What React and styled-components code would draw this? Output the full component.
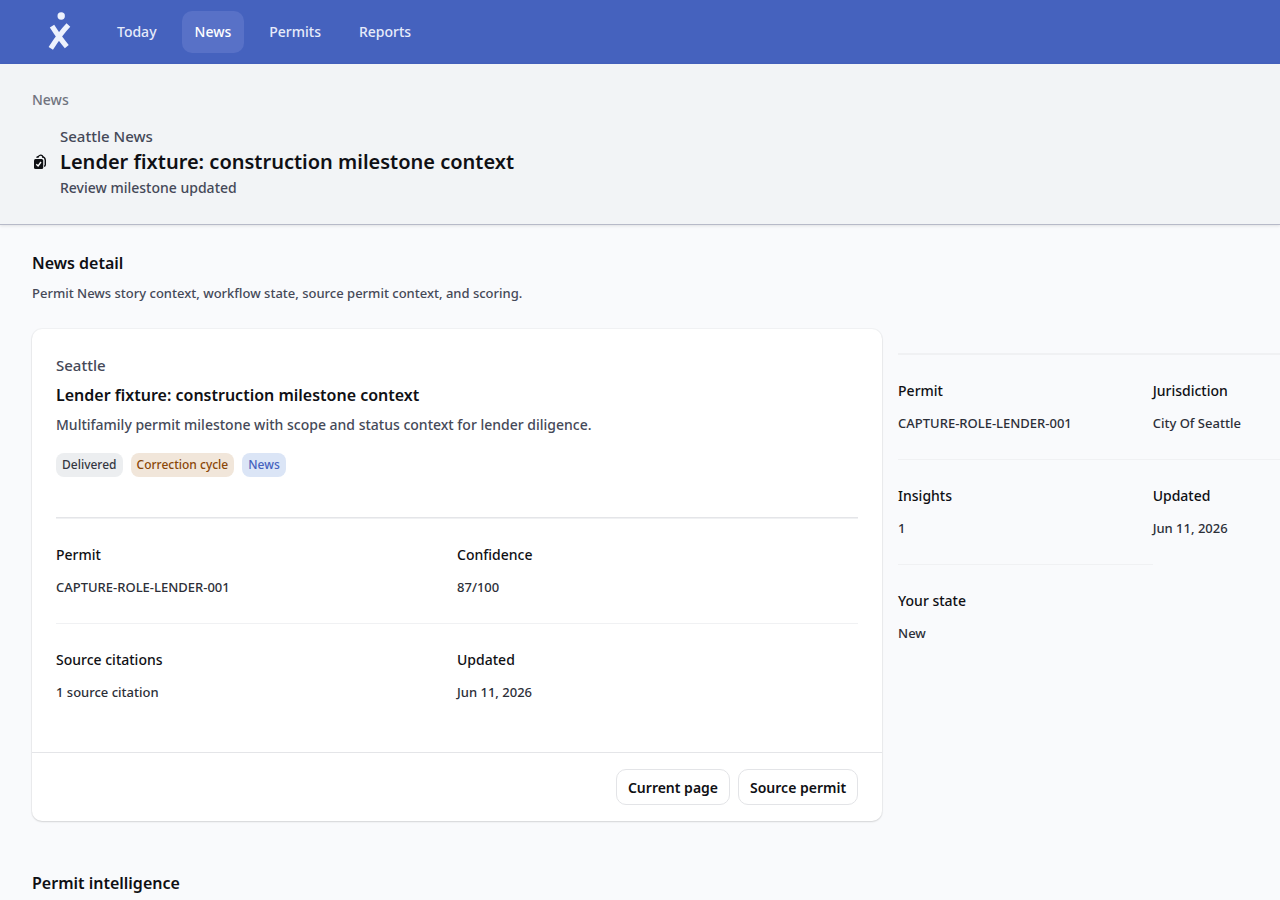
import React from "react";
import styled, { createGlobalStyle } from "styled-components";

const GlobalStyle = createGlobalStyle`
  *, *::before, *::after {
    box-sizing: border-box;
  }

  body {
    margin: 0;
    background-color: #f9fafc;
    color: #0f1014;
    font-family: "Noto Sans", sans-serif;
    font-size: 14px;
    line-height: 24px;
  }

  h1, h2, h3, p, dl, dt, dd {
    margin: 0;
  }
`;

const TopBar = styled.header`
  display: flex;
  align-items: center;
  height: 64px;
  padding: 0 48px;
  gap: 32px;
  background-color: #4562be;
`;

const LogoLink = styled.a`
  display: flex;
  width: 24px;
  height: 40px;
`;

const Nav = styled.nav`
  display: flex;
  gap: 12px;
`;

const NavLink = styled.a`
  padding: 9px 13px;
  border-radius: 10px;
  font-weight: 500;
  text-decoration: none;
  color: ${({ $active }) => ($active ? "#ffffff" : "#e6ebfa")};
  background-color: ${({ $active }) => ($active ? "#5871c7" : "transparent")};
`;

const PageHeader = styled.section`
  padding: 24px 32px;
  background-color: #f2f4f6;
  border-bottom: 1px solid #b7bac8;
  box-shadow: 0 1px 3px #0000001a;
`;

const Crumb = styled.a`
  display: block;
  font-weight: 500;
  color: #70737e;
  text-decoration: none;
`;

const Heading = styled.div`
  display: flex;
  align-items: center;
  gap: 12px;
  margin-top: 12px;
`;

const Eyebrow = styled.p`
  font-size: 15px;
  font-weight: 500;
  color: #454958;
`;

const PageTitle = styled.h1`
  font-size: 20px;
  font-weight: 600;
  line-height: 28px;
`;

const Subtitle = styled.p`
  font-weight: 500;
  color: #454958;
`;

const Main = styled.main`
  padding: 26px 0 0 32px;
`;

const SectionTitle = styled.h2`
  font-size: 16px;
  font-weight: 600;
`;

const SectionText = styled.p`
  margin-top: 6px;
  font-size: 13px;
  font-weight: 500;
  color: #454958;
`;

const Columns = styled.div`
  display: grid;
  grid-template-columns: minmax(0, 69fr) minmax(0, 31fr);
  align-items: start;
  gap: 16px;
  margin: 24px 0 50px;
`;

const Card = styled.article`
  background-color: #ffffff;
  border-radius: 10px;
  box-shadow: 0 0 0 1px #00000008, 0 1px 2px #0000001f;
`;

const CardBody = styled.div`
  padding: 24px;
`;

const CardTitle = styled.h3`
  margin-top: 6px;
  font-size: 16px;
  font-weight: 600;
`;

const CardText = styled.p`
  margin-top: 6px;
  font-weight: 500;
  color: #454958;
`;

const Badges = styled.div`
  display: flex;
  gap: 8px;
  margin: 16px 0 40px;
`;

const badgeTones = {
  neutral: { text: "#353842", fill: "#eceef0" },
  warning: { text: "#8a4708", fill: "#f1e6da" },
  info: { text: "#4562be", fill: "#dbe5f6" },
};

const Badge = styled.span`
  padding: 0 6px;
  border-radius: 8px;
  font-size: 12px;
  font-weight: 500;
  color: ${({ $tone }) => badgeTones[$tone].text};
  background-color: ${({ $tone }) => badgeTones[$tone].fill};
`;

const Details = styled.dl`
  display: grid;
  grid-template-columns: ${({ $columns }) => $columns};
  border-top: 1px solid #f0f1f3;
`;

const CardDetails = styled(Details)`
  border-top-color: #e4e5e8;
`;

const Detail = styled.div`
  padding: 24px 0;
  border-top: 1px solid #f0f1f3;
  white-space: nowrap;
`;

const Term = styled.dt`
  font-weight: 500;
`;

const Value = styled.dd`
  && {
    margin-top: 8px;
  }
  font-size: 13px;
  font-weight: 500;
  color: #2c2f38;
`;

const CardFooter = styled.footer`
  display: flex;
  justify-content: flex-end;
  gap: 8px;
  padding: 16px 24px;
  border-top: 1px solid #e4e5e8;
`;

const Button = styled.button`
  height: 36px;
  padding: 0 11px;
  border: 1px solid #e3e4e7;
  border-radius: 10px;
  background-color: #ffffff;
  color: #0f1014;
  font-family: inherit;
  font-size: 14px;
  font-weight: 600;
`;

const Aside = styled.aside`
  padding-top: 24px;
`;

const navItems = ["Today", "News", "Permits", "Reports"];

const storyDetails = [
  ["Permit", "CAPTURE-ROLE-LENDER-001"],
  ["Confidence", "87/100"],
  ["Source citations", "1 source citation"],
  ["Updated", "Jun 11, 2026"],
];

const permitDetails = [
  ["Permit", "CAPTURE-ROLE-LENDER-001"],
  ["Jurisdiction", "City Of Seattle"],
  ["Insights", "1"],
  ["Updated", "Jun 11, 2026"],
  ["Your state", "New"],
];

function Logo() {
  return (
    <svg width="24" height="40" viewBox="0 0 24 40" aria-hidden="true">
      <circle cx="13.2" cy="4" r="3.7" fill="#edf2fd" />
      <path
        d="M4 14.2C8 20.5 13 28 18.8 34.6M20.4 13C14.6 19 8.8 27 2.8 36.4"
        fill="none"
        stroke="#edf2fd"
        strokeWidth="5.2"
      />
    </svg>
  );
}

function ChecklistIcon() {
  return (
    <svg width="16" height="16" viewBox="0 0 16 16" aria-hidden="true">
      <path
        d="M4.6 3.6C5 2.9 5.8 2.6 6.6 2.6M10.2 2.6c2.2.4 3.1 1.6 3.1 3.6v4.6c0 .8-.4 1.3-1.2 1.6"
        fill="none"
        stroke="#0f1014"
        strokeWidth="1.4"
      />
      <path
        d="M5.8 3.6C6.6 1.8 7.6 1.2 8.6 1.2c1.5 0 2.3 1 2.3 2.6"
        fill="none"
        stroke="#0f1014"
        strokeWidth="1.2"
      />
      <rect x="2" y="5" width="9.2" height="10" rx="1.5" fill="#0f1014" />
      <path
        d="m4.3 10.2 1.8 1.8L9 8"
        fill="none"
        stroke="#ffffff"
        strokeWidth="1.4"
      />
    </svg>
  );
}

function DetailItems({ items }) {
  return items.map(([term, value]) => (
    <Detail key={term}>
      <Term>{term}</Term>
      <Value>{value}</Value>
    </Detail>
  ));
}

function App() {
  return (
    <>
      <GlobalStyle />
      <TopBar>
        <LogoLink href="#" aria-label="Home">
          <Logo />
        </LogoLink>
        <Nav>
          {navItems.map((item) => (
            <NavLink key={item} href="#" $active={item === "News"}>
              {item}
            </NavLink>
          ))}
        </Nav>
      </TopBar>
      <PageHeader>
        <Crumb href="#">News</Crumb>
        <Heading>
          <ChecklistIcon />
          <div>
            <Eyebrow>Seattle News</Eyebrow>
            <PageTitle>Lender fixture: construction milestone context</PageTitle>
            <Subtitle>Review milestone updated</Subtitle>
          </div>
        </Heading>
      </PageHeader>
      <Main>
        <SectionTitle>News detail</SectionTitle>
        <SectionText>
          Permit News story context, workflow state, source permit context, and scoring.
        </SectionText>
        <Columns>
          <Card>
            <CardBody>
              <Eyebrow>Seattle</Eyebrow>
              <CardTitle>Lender fixture: construction milestone context</CardTitle>
              <CardText>
                Multifamily permit milestone with scope and status context for lender diligence.
              </CardText>
              <Badges>
                <Badge $tone="neutral">Delivered</Badge>
                <Badge $tone="warning">Correction cycle</Badge>
                <Badge $tone="info">News</Badge>
              </Badges>
              <CardDetails $columns="1fr 1fr">
                <DetailItems items={storyDetails} />
              </CardDetails>
            </CardBody>
            <CardFooter>
              <Button type="button">Current page</Button>
              <Button type="button">Source permit</Button>
            </CardFooter>
          </Card>
          <Aside>
            <Details $columns="2fr 1fr">
              <DetailItems items={permitDetails} />
            </Details>
          </Aside>
        </Columns>
        <SectionTitle>Permit intelligence</SectionTitle>
      </Main>
    </>
  );
}

export default App;
